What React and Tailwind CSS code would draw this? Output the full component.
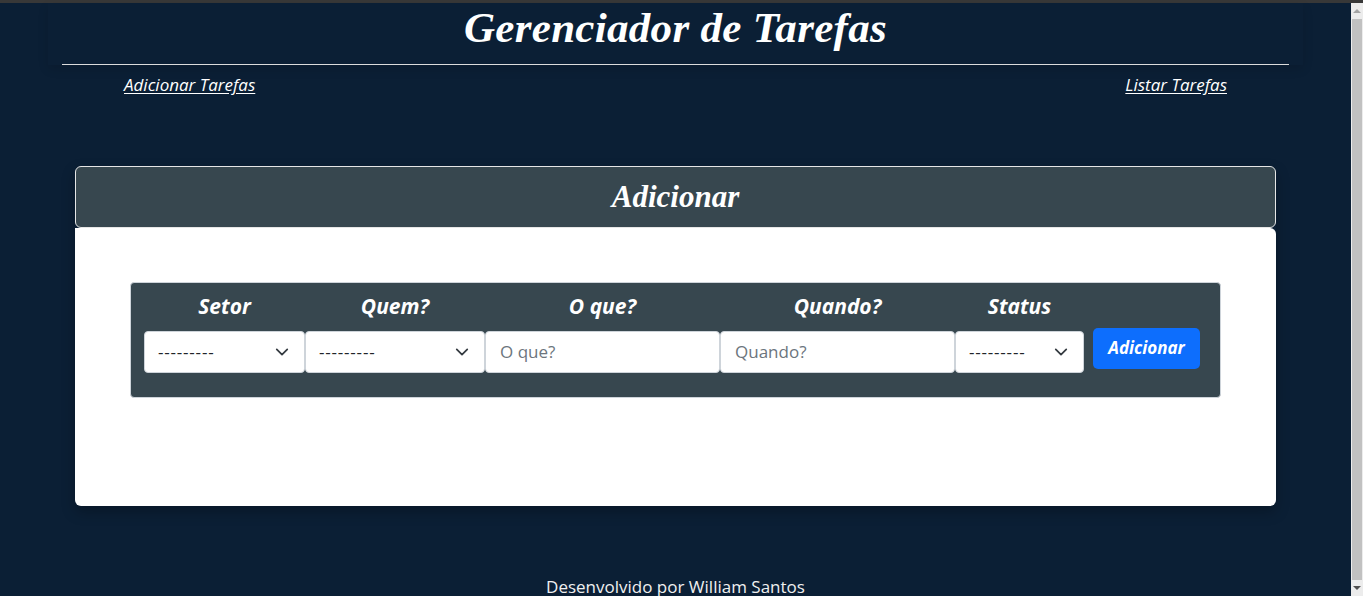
function Chevron() {
  return (
    <svg width="14" height="14" viewBox="0 0 16 16" className="shrink-0">
      <path d="M2 5l6 6 6-6" fill="none" stroke="#343a40" strokeWidth="2" strokeLinecap="round" strokeLinejoin="round" />
    </svg>
  );
}

function SelectBox({ width }) {
  return (
    <div className={`${width} h-[42px] bg-white border border-[#ced4da] rounded-[4px] flex items-center justify-between pl-[13px] pr-[15px] text-[17px] text-[#212529]`}>
      <span className="tracking-[0.8px]">---------</span>
      <Chevron />
    </div>
  );
}

function TextBox({ width, placeholder }) {
  return (
    <div className={`${width} h-[42px] bg-white border border-[#ced4da] rounded-[4px] flex items-center px-[14px] text-[17px] text-[#6c757d]`}>
      {placeholder}
    </div>
  );
}

const cols = [
  { label: 'Setor', width: 'w-[161px]' },
  { label: 'Quem?', width: 'w-[180px]' },
  { label: 'O que?', width: 'w-[235px]' },
  { label: 'Quando?', width: 'w-[235px]' },
  { label: 'Status', width: 'w-[129px]' },
];

function Scrollbar() {
  return (
    <div className="w-[12px] shrink-0 bg-[#ececec] flex flex-col">
      <div className="h-[16px] flex items-center justify-center">
        <div className="w-0 h-0 border-x-[4px] border-x-transparent border-b-[4px] border-b-[#a3a3a3]" />
      </div>
      <div className="mx-[1px] flex-1 bg-[#c1c1c1]" />
      <div className="h-[16px] flex items-center justify-center">
        <div className="w-0 h-0 border-x-[4px] border-x-transparent border-t-[4px] border-t-[#505050]" />
      </div>
    </div>
  );
}

export default function App() {
  const sans = "font-['Open_Sans',sans-serif]";
  const serif = "font-['Liberation_Serif',serif]";

  return (
    <div className={`h-[596px] overflow-hidden flex flex-col bg-[#0b1f35] text-white ${sans}`}>
      <div className="h-[3px] shrink-0 bg-[#383838]" />
      <div className="flex flex-1 min-h-0">
        <div className="flex-1 min-w-0">
          {/* Header */}
          <header className="mx-[48px] shadow-[0_4px_10px_rgba(0,0,0,0.12)]">
            <div className="mx-[14px] border-b border-[#dcdcdc] h-[62px] flex items-start justify-center pt-[1px]">
              <h1 className={`${serif} italic font-bold text-[43px] leading-[48px] tracking-[0.3px]`}>
                Gerenciador de Tarefas
              </h1>
            </div>
          </header>
          <nav className="flex justify-between px-[124px] mt-[7px] text-[17px] italic">
            <a href="#" className="underline underline-offset-2">Adicionar Tarefas</a>
            <a href="#" className="underline underline-offset-2">Listar Tarefas</a>
          </nav>

          {/* Card */}
          <main className="mx-[75px] mt-[68px] shadow-[0_6px_14px_rgba(0,0,0,0.25)] rounded-[6px]">
            <div className="h-[62px] bg-[#37474f] border border-[#e6e6e6] rounded-[6px] flex items-center justify-center">
              <h2 className={`${serif} italic font-bold text-[31px] leading-none`}>Adicionar</h2>
            </div>
            <div className="bg-white rounded-b-[6px] rounded-tr-[6px] pt-[54px] pb-[108px] px-[55px]">
              <div className="bg-[#37474f] border border-[#ced4da] rounded-[4px] h-[116px] pl-[13px] pt-[10px] flex items-start">
                {cols.map((c, i) => (
                  <div key={c.label} className={`${c.width} flex flex-col`}>
                    <div className="h-[38px] text-center font-bold italic text-[21px] leading-[26px]">{c.label}</div>
                    {i === 0 || i === 1 || i === 4 ? (
                      <SelectBox width="w-full" />
                    ) : (
                      <TextBox width="w-full" placeholder={c.label} />
                    )}
                  </div>
                ))}
                <button className="ml-[9px] mt-[35px] w-[107px] h-[41px] bg-[#0d6efd] rounded-[5px] font-bold italic text-[17px] text-white">
                  Adicionar
                </button>
              </div>
            </div>
          </main>

          <footer className="text-center text-[17px] mt-[68px] pb-[20px] text-[#f0f0f0]">
            Desenvolvido por William Santos
          </footer>
        </div>
        <Scrollbar />
      </div>
    </div>
  );
}
